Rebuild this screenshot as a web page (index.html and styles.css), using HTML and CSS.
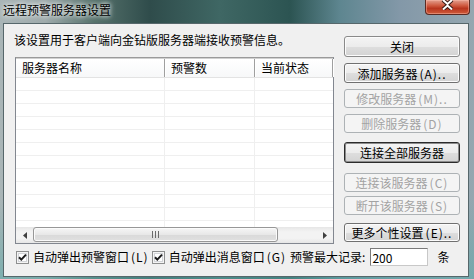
FILE: index.html
```html
<!DOCTYPE html>
<html lang="zh-CN">
<head>
  <meta charset="UTF-8">
  <title>远程预警服务器设置</title>
  <link rel="stylesheet" href="styles.css">
</head>
<body>
  <div class="window">
    <div class="titlebar">
      <span class="title">远程预警服务器设置</span>
      <span class="close-btn">
        <svg width="13" height="10" viewBox="0 0 13 10">
          <path d="M2 0 L6.5 4 L11 0 M2 9.5 L6.5 5.5 L11 9.5" stroke="#3a1c18" stroke-width="4" fill="none"/>
          <path d="M2 0 L6.5 4 L11 0 M2 9.5 L6.5 5.5 L11 9.5" stroke="#fff" stroke-width="2" fill="none"/>
        </svg>
      </span>
    </div>

    <div class="client">
      <div class="main">
        <div class="left">
          <p class="desc">该设置用于客户端向金钻版服务器端接收预警信息。</p>
          <div class="listview">
            <div class="lv-header">
              <div class="hcol c1">服务器名称</div>
              <div class="hcol c2">预警数</div>
              <div class="hcol c3">当前状态</div>
            </div>
            <div class="lv-body">
              <div class="row"><div class="c1"></div><div class="c2"></div><div class="c3"></div></div>
              <div class="row"><div class="c1"></div><div class="c2"></div><div class="c3"></div></div>
              <div class="row"><div class="c1"></div><div class="c2"></div><div class="c3"></div></div>
              <div class="row"><div class="c1"></div><div class="c2"></div><div class="c3"></div></div>
              <div class="row"><div class="c1"></div><div class="c2"></div><div class="c3"></div></div>
              <div class="row"><div class="c1"></div><div class="c2"></div><div class="c3"></div></div>
              <div class="row"><div class="c1"></div><div class="c2"></div><div class="c3"></div></div>
              <div class="row"><div class="c1"></div><div class="c2"></div><div class="c3"></div></div>
              <div class="row"><div class="c1"></div><div class="c2"></div><div class="c3"></div></div>
              <div class="row"><div class="c1"></div><div class="c2"></div><div class="c3"></div></div>
              <div class="row"><div class="c1"></div><div class="c2"></div><div class="c3"></div></div>
              <div class="row"><div class="c1"></div><div class="c2"></div><div class="c3"></div></div>
            </div>
            <div class="hscroll">
              <div class="sb-arrow">
                <svg width="4" height="7" viewBox="0 0 4 7"><path d="M4 0 L0 3.5 L4 7 Z" fill="#404040"/></svg>
              </div>
              <div class="sb-thumb">
                <svg width="7" height="7" viewBox="0 0 7 7">
                  <path d="M0.5 0 V7 M3.5 0 V7 M6.5 0 V7" stroke="#6a6a6a" stroke-width="1"/>
                </svg>
              </div>
              <div class="sb-track"></div>
              <div class="sb-arrow">
                <svg width="4" height="7" viewBox="0 0 4 7"><path d="M0 0 L4 3.5 L0 7 Z" fill="#404040"/></svg>
              </div>
            </div>
          </div>
        </div>

        <div class="buttons">
          <button class="btn btn-close">关闭</button>
          <button class="btn btn-add">添加服务器<span class="key">(A)..</span></button>
          <button class="btn btn-mid" disabled>修改服务器<span class="key">(M)..</span></button>
          <button class="btn btn-mid" disabled>删除服务器<span class="key">(D)</span></button>
          <button class="btn btn-default btn-all">连接全部服务器</button>
          <button class="btn btn-conn" disabled>连接该服务器<span class="key">(C)</span></button>
          <button class="btn btn-cut" disabled>断开该服务器<span class="key">(S)</span></button>
          <button class="btn btn-more">更多个性设置<span class="key">(E)..</span></button>
        </div>
      </div>

      <div class="options">
        <label class="check">
          <svg class="box" width="13" height="13" viewBox="0 0 13 13">
            <rect x="0.5" y="0.5" width="12" height="12" fill="#f4f4f4" stroke="#8e8f8f"/>
            <rect x="2.5" y="2.5" width="8" height="8" fill="#fff" stroke="#d2d4d8"/>
            <path d="M3 6.2 L5.3 8.6 L10 3.6" stroke="#1b1b1b" stroke-width="2" fill="none"/>
          </svg>
          自动弹出预警窗口<span class="key">(L)</span>
        </label>
        <label class="check check-second">
          <svg class="box" width="13" height="13" viewBox="0 0 13 13">
            <rect x="0.5" y="0.5" width="12" height="12" fill="#f4f4f4" stroke="#8e8f8f"/>
            <rect x="2.5" y="2.5" width="8" height="8" fill="#fff" stroke="#d2d4d8"/>
            <path d="M3 6.2 L5.3 8.6 L10 3.6" stroke="#1b1b1b" stroke-width="2" fill="none"/>
          </svg>
          自动弹出消息窗口<span class="key">(G)</span>
        </label>
        <span class="max-label">预警最大记录:</span>
        <input class="max-input" type="text" value="200">
        <span class="unit">条</span>
      </div>
    </div>
  </div>
</body>
</html>
```

FILE: styles.css
```css
body {
  margin: 0;
  font-family: "Noto Sans CJK SC", "DejaVu Sans", sans-serif;
  font-size: 12px;
  color: #000;
  background: #3b5f5e;
}

.window {
  width: 474px;
  height: 279px;
  display: flex;
  flex-direction: column;
  background:
    linear-gradient(to bottom, rgba(0,0,0,0) 0, rgba(0,0,0,0) 200px, rgba(90,170,168,0.55) 279px),
    linear-gradient(90deg, #a9b5b7 0, #9eaaab 45px, #55716b 95px, #2f4c4b 150px, #3f6764 220px, #2c5452 290px, #5e8690 340px, #8398a8 400px, #95a7b0 474px);
}

/* title bar */
.titlebar {
  height: 23px;
  display: flex;
  align-items: flex-start;
}
.title {
  margin: 3px 0 0 3px;
  line-height: 14px;
  text-shadow: 0 0 4px #fff, 0 0 6px rgba(255,255,255,0.8);
}
.close-btn {
  margin-left: auto;
  margin-right: 4px;
  width: 43px;
  height: 14px;
  display: flex;
  justify-content: center;
  align-items: flex-start;
  border: 1px solid #5a2a22;
  border-top: none;
  border-radius: 0 0 4px 4px;
  background: linear-gradient(#e3a08f 0, #cf5a40 40%, #b8351e 60%, #cf5c3a 100%);
  box-shadow: inset 0 0 0 1px rgba(255,190,175,0.45);
}

/* client area */
.client {
  flex: 1;
  margin: 0 5px 2px 3px;
  border: 1px solid #56676b;
  background: #f0f0f0;
  display: flex;
  flex-direction: column;
}

.main {
  display: flex;
}

.left {
  width: 319px;
  margin-left: 11px;
}

.desc {
  margin: 9px 0 10px -1px;
  line-height: 14px;
  white-space: nowrap;
}

/* list view */
.listview {
  height: 185px;
  border: 1px solid #828790;
  border-top-color: #9a9a9a;
  background: #fff;
  display: flex;
  flex-direction: column;
}
.lv-header {
  height: 18px;
  display: flex;
  background: linear-gradient(#ffffff, #f7f8f9);
  border-bottom: 1px solid #e3e3e3;
  border-top: 1px solid #d0d0d0;
}
.hcol {
  line-height: 17px;
  padding-left: 6px;
  box-sizing: border-box;
  border-right: 1px solid #9f9f9f;
  box-shadow: 1px 0 0 #fff;
}
.c1 {
  width: 149px;
  flex: none;
}
.c2 {
  width: 90px;
  flex: none;
}
.c3 {
  flex: 1;
}
.lv-body {
  flex: 1;
  overflow: hidden;
}
.row {
  height: 12px;
  display: flex;
  border-bottom: 1px solid #efefef;
}
.row .c1,
.row .c2 {
  box-sizing: border-box;
  border-right: 1px solid #efefef;
}

/* horizontal scroll bar */
.hscroll {
  height: 16px;
  display: flex;
  background: linear-gradient(#e6e6e6, #f3f3f3 30%, #f3f3f3 70%, #e6e6e6);
}
.sb-arrow {
  width: 17px;
  display: flex;
  align-items: center;
  justify-content: center;
}
.sb-thumb {
  width: 245px;
  margin: 0 0 1px;
  box-sizing: border-box;
  border: 1px solid #979797;
  border-radius: 3px;
  background: linear-gradient(#f6f6f6, #e8e8e8 50%, #d9d9d9 51%, #e0e0e0);
  box-shadow: inset 0 0 0 1px #fbfbfb;
  display: flex;
  align-items: center;
  justify-content: center;
}
.sb-track {
  flex: 1;
}

/* mnemonic suffixes are drawn a little wider, like the old bitmap font */
.key {
  margin-left: 2px;
  letter-spacing: 1px;
}

/* right side buttons */
.buttons {
  margin-left: 10px;
  width: 116px;
  display: flex;
  flex-direction: column;
}
.btn {
  height: 20px;
  padding: 0;
  font: inherit;
  color: #000;
  border: 1px solid #707070;
  border-radius: 3px;
  background: linear-gradient(#f4f4f4, #ececec 50%, #dedede 51%, #d3d3d3);
  box-shadow: inset 0 0 0 1px #fcfcfc;
  white-space: nowrap;
}
.btn:disabled {
  color: #a3a3a3;
  border-color: #adb2b5;
  background: #f4f4f4;
  box-shadow: none;
}
.btn-default {
  border-color: #2b2b2b;
  box-shadow: inset 0 0 0 1px #8c8c8c;
}
.btn-close { margin-top: 12px; height: 21px; border-color: #8a8a8a; }
.btn-add { margin-top: 6px; }
.btn-mid { margin-top: 6px; height: 19px; }
.btn-all { margin-top: 9px; height: 21px; }
.btn-conn { margin-top: 10px; height: 19px; }
.btn-cut { margin-top: 4px; height: 19px; }
.btn-more { margin-top: 8px; height: 19px; }

/* bottom options */
.options {
  margin-top: 4px;
  height: 18px;
  display: flex;
  align-items: center;
  padding-left: 12px;
  white-space: nowrap;
}
.check {
  display: flex;
  align-items: center;
  line-height: 14px;
}
.check .box {
  margin-right: 4px;
}
.check-second {
  margin-left: 3px;
}
.max-label {
  margin-left: 4px;
  line-height: 14px;
}
.max-input {
  width: 58px;
  height: 18px;
  margin-left: 5px;
  box-sizing: border-box;
  padding: 0 1px;
  border: 1px solid #7a7a7a;
  border-right-color: #c8c8c8;
  border-bottom-color: #c8c8c8;
  font: inherit;
  line-height: 16px;
}
.unit {
  margin-left: 9px;
  line-height: 14px;
}
```
